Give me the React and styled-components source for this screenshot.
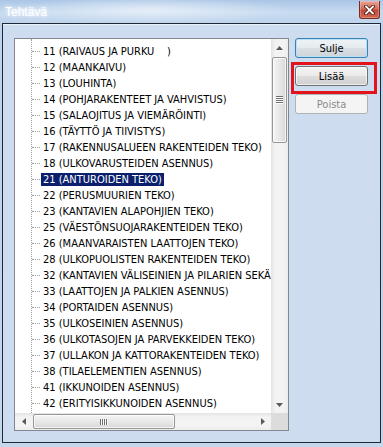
import React from 'react';
import styled, {createGlobalStyle, css} from 'styled-components';

const font = {
  ui: '"DejaVu Sans Condensed", "DejaVu Sans", "Liberation Sans", sans-serif',
};

const GlobalStyle = createGlobalStyle`
  * {
    box-sizing: border-box;
  }

  body {
    margin: 0;
    padding: 0;
    background: #c2d6ec;
    font-family: ${font.ui};
  }
`;

const tasks = [
  '11 (RAIVAUS JA PURKU    )',
  '12 (MAANKAIVU)',
  '13 (LOUHINTA)',
  '14 (POHJARAKENTEET JA VAHVISTUS)',
  '15 (SALAOJITUS JA VIEMÄRÖINTI)',
  '16 (TÄYTTÖ JA TIIVISTYS)',
  '17 (RAKENNUSALUEEN RAKENTEIDEN TEKO)',
  '18 (ULKOVARUSTEIDEN ASENNUS)',
  '21 (ANTUROIDEN TEKO)',
  '22 (PERUSMUURIEN TEKO)',
  '23 (KANTAVIEN ALAPOHJIEN TEKO)',
  '25 (VÄESTÖNSUOJARAKENTEIDEN TEKO)',
  '26 (MAANVARAISTEN LAATTOJEN TEKO)',
  '28 (ULKOPUOLISTEN RAKENTEIDEN TEKO)',
  '32 (KANTAVIEN VÄLISEINIEN JA PILARIEN SEKÄ PALKKIEN TEKO)',
  '33 (LAATTOJEN JA PALKIEN ASENNUS)',
  '34 (PORTAIDEN ASENNUS)',
  '35 (ULKOSEINIEN ASENNUS)',
  '36 (ULKOTASOJEN JA PARVEKKEIDEN TEKO)',
  '37 (ULLAKON JA KATTORAKENTEIDEN TEKO)',
  '38 (TILAELEMENTIEN ASENNUS)',
  '41 (IKKUNOIDEN ASENNUS)',
  '42 (ERITYISIKKUNOIDEN ASENNUS)',
  '43 (OVIEN ASENNUS)',
];

const Window = styled.div`
  width: 383px;
  height: 447px;
  display: flex;
  flex-direction: column;
  background:
    radial-gradient(ellipse 140px 14px at 150px 10px, rgba(255,255,255,0.55), rgba(255,255,255,0)),
    linear-gradient(180deg, #a9c5e6 0px, #c8dbf0 12px, #bdd3ec 24px, #c3d7ed 100%);
  overflow: hidden;
`;

const TitleBar = styled.div`
  height: 23px;
  flex: 0 0 23px;
  display: flex;
  align-items: flex-start;
  justify-content: space-between;
  padding: 0 3px 0 5px;
`;

const Title = styled.span`
  margin-top: 5px;
  font-family: "Liberation Sans", sans-serif;
  font-size: 12px;
  color: #ffffff;
  text-shadow: 0 0 3px rgba(255,255,255,0.9), 0 0 6px rgba(255,255,255,0.7);
`;

const CloseButton = styled.div`
  width: 21px;
  height: 18px;
  margin-top: 1px;
  display: flex;
  align-items: center;
  justify-content: center;
  border: 1px solid #7a2a20;
  border-top: none;
  border-radius: 0 0 3px 3px;
  background: linear-gradient(180deg, #e6a596 0%, #d56d5c 45%, #c4493a 55%, #cf6a52 100%);
  box-shadow: inset 0 0 0 1px rgba(255,255,255,0.25);
`;

const Client = styled.div`
  flex: 1;
  min-height: 0;
  margin: 0 2px 4px 2px;
  border: 1px solid #1f2833;
  box-shadow: inset 0 1px 0 #e9f1fa;
  background: #cddcee;
  display: flex;
  gap: 6px;
  padding: 14px 11px 11px 11px;
`;

const Tree = styled.div`
  flex: 0 0 275px;
  min-height: 0;
  border: 1px solid #828790;
  background: #ffffff;
  display: grid;
  grid-template-columns: minmax(0, 1fr) 17px;
  grid-template-rows: minmax(0, 1fr) 17px;
  overflow: hidden;
`;

const List = styled.div`
  position: relative;
  overflow: hidden;
  min-height: 0;
  padding-top: 4px;

  &::before {
    content: '';
    position: absolute;
    left: 16px;
    top: 0;
    bottom: 0;
    border-left: 1px dotted #9c9c9c;
  }
`;

const Row = styled.div`
  position: relative;
  height: 16px;
  display: flex;
  align-items: center;
  padding-left: 26px;

  &::after {
    content: '';
    position: absolute;
    left: 17px;
    width: 8px;
    top: 8px;
    border-top: 1px dotted #9c9c9c;
  }
`;

const Label = styled.span`
  height: 13px;
  line-height: 13px;
  padding: 0 2px;
  font-family: ${font.ui};
  font-stretch: condensed;
  font-size: 11px;
  color: #000000;
  white-space: pre;
  ${p => p.$selected && css`
    background: #0b1f6c;
    color: #ffffff;
  `}
`;

const VScroll = styled.div`
  display: flex;
  flex-direction: column;
  min-height: 0;
  background: linear-gradient(90deg, #e4e4e4 0%, #f3f3f3 25%, #f3f3f3 75%, #ececec 100%);
`;

const HScroll = styled.div`
  display: flex;
  background: linear-gradient(180deg, #e4e4e4 0%, #f3f3f3 25%, #f3f3f3 75%, #ececec 100%);
`;

const Arrow = styled.div`
  flex: 0 0 17px;
  width: 17px;
  height: 17px;
  display: flex;
  align-items: center;
  justify-content: center;
`;

const Track = styled.div`
  flex: 1;
  min-height: 0;
  display: flex;
  flex-direction: ${p => (p.$vertical ? 'column' : 'row')};
`;

const Thumb = styled.div`
  display: flex;
  align-items: center;
  justify-content: center;
  border: 1px solid #979797;
  border-radius: 2px;
  ${p => p.$vertical ? css`
    margin: ${p.$offset}px 1px 0 1px;
    height: ${p.$size}px;
    flex-direction: column;
    background: linear-gradient(90deg, #f4f4f4 0%, #e8e8e8 50%, #d8d8d8 100%);
  ` : css`
    margin: 1px 0 1px ${p.$offset}px;
    width: ${p.$size}px;
    background: linear-gradient(180deg, #f4f4f4 0%, #e8e8e8 50%, #d8d8d8 100%);
  `}
  box-shadow: inset 0 0 0 1px rgba(255,255,255,0.7);
`;

const Grip = styled.span`
  display: block;
  background: #6e6e6e;
  box-shadow: ${p => (p.$vertical ? '0 1px 0 #ffffff' : '1px 0 0 #ffffff')};
  ${p => p.$vertical ? css`
    width: 7px;
    height: 1px;
    margin-bottom: 1px;
  ` : css`
    width: 1px;
    height: 6px;
    margin-right: 1px;
  `}
`;

const Corner = styled.div`
  background: #dcdcdc;
`;

const Buttons = styled.div`
  flex: 0 0 73px;
  display: flex;
  flex-direction: column;
  gap: 8px;
`;

const Marked = styled.div`
  position: relative;

  &::after {
    content: '';
    position: absolute;
    top: -4px;
    left: -4px;
    right: -9px;
    bottom: -8px;
    border: 3px solid #e3121b;
    pointer-events: none;
  }
`;

const Button = styled.div`
  height: 20px;
  display: flex;
  align-items: center;
  justify-content: center;
  border: 1px solid #707070;
  border-radius: 3px;
  font-family: ${font.ui};
  font-stretch: condensed;
  font-size: 11px;
  color: #000000;
  background: linear-gradient(180deg, #f2f2f2 0%, #ebebeb 48%, #dddddd 52%, #cfcfcf 100%);
  box-shadow: inset 0 0 0 1px rgba(255,255,255,0.65);

  ${p => p.$default && css`
    border-color: #3c7fb1;
    background: linear-gradient(180deg, #eef3f7 0%, #e6ebef 48%, #d9dfe4 52%, #cdd4da 100%);
    box-shadow: inset 0 0 0 1px #b6e2f8;
  `}

  ${p => p.$disabled && css`
    border-color: #adb2b5;
    background: #f4f4f4;
    color: #8a8a8a;
    box-shadow: none;
  `}
`;

const Tri = ({dir}) => {
  const pts = {
    up: '0,4 3.5,0 7,4',
    down: '0,0 3.5,4 7,0',
    left: '4,0 0,3.5 4,7',
    right: '0,0 4,3.5 0,7',
  }[dir];
  const vert = dir === 'up' || dir === 'down';
  return (
    <svg width={vert ? 7 : 4} height={vert ? 4 : 7} viewBox={vert ? '0 0 7 4' : '0 0 4 7'}>
      <polygon points={pts} fill="#5a5a5a" />
    </svg>
  );
};

const CloseGlyph = () => (
  <svg width="11" height="10" viewBox="0 0 11 10">
    <path d="M2 1.5 L9 8.5 M9 1.5 L2 8.5" stroke="#4a1810" strokeWidth="3.6" strokeLinecap="square" />
    <path d="M2 1.5 L9 8.5 M9 1.5 L2 8.5" stroke="#ffffff" strokeWidth="1.8" strokeLinecap="square" />
  </svg>
);

const App = () => (
  <>
    <GlobalStyle />
    <Window>
      <TitleBar>
        <Title>Tehtävä</Title>
        <CloseButton><CloseGlyph /></CloseButton>
      </TitleBar>
      <Client>
        <Tree>
          <List>
            {tasks.map((t, i) => (
              <Row key={t}>
                <Label $selected={i === 8}>{t}</Label>
              </Row>
            ))}
          </List>
          <VScroll>
            <Arrow><Tri dir="up" /></Arrow>
            <Track $vertical>
              <Thumb $vertical $offset={1} $size={86}>
                <Grip $vertical />
                <Grip $vertical />
                <Grip $vertical />
                <Grip $vertical />
              </Thumb>
            </Track>
            <Arrow><Tri dir="down" /></Arrow>
          </VScroll>
          <HScroll>
            <Arrow><Tri dir="left" /></Arrow>
            <Track>
              <Thumb $offset={1} $size={142}>
                <Grip />
                <Grip />
                <Grip />
                <Grip />
              </Thumb>
            </Track>
            <Arrow><Tri dir="right" /></Arrow>
          </HScroll>
          <Corner />
        </Tree>
        <Buttons>
          <Button $default>Sulje</Button>
          <Marked>
            <Button>Lisää</Button>
          </Marked>
          <Button $disabled>Poista</Button>
        </Buttons>
      </Client>
    </Window>
  </>
);

export default App;
